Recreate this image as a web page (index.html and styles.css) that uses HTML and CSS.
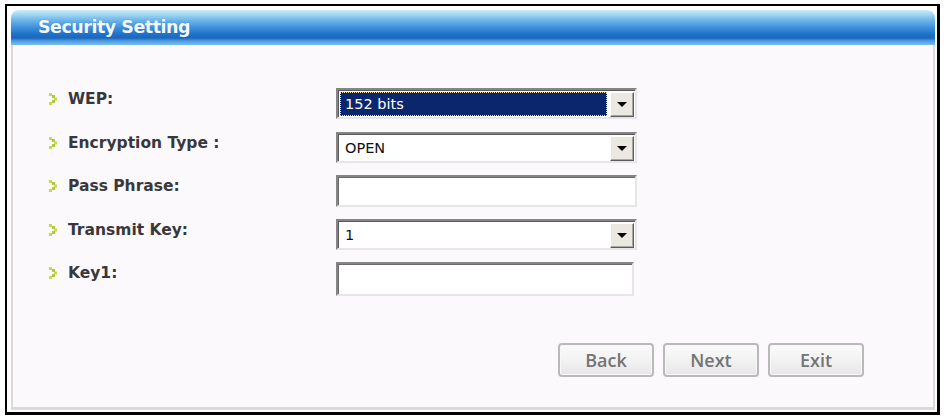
FILE: index.html
```html
<!DOCTYPE html>
<html>
<head>
<meta charset="utf-8">
<title>Security Setting</title>
<link rel="stylesheet" href="styles.css">
</head>
<body>
<div class="frame">
  <div class="panel">
    <div class="header"><h1 class="title">Security Setting</h1></div>
    <div class="content">
      <div class="form">
        <div class="label"><svg class="bullet" width="9" height="12" viewBox="0 0 9 12"><rect x="0" y="0" width="3" height="3" fill="#c4dc48"/><rect x="3" y="2" width="3" height="3" fill="#a9cb3a"/><rect x="5" y="4.5" width="3" height="3" fill="#c4dc48"/><rect x="3" y="7" width="3" height="3" fill="#a9cb3a"/><rect x="0" y="9" width="3" height="3" fill="#c4dc48"/></svg><span>WEP:</span></div>
        <div class="combo"><div class="value selected">152 bits</div><div class="drop"><i class="tri"></i></div></div>

        <div class="label"><svg class="bullet" width="9" height="12" viewBox="0 0 9 12"><rect x="0" y="0" width="3" height="3" fill="#c4dc48"/><rect x="3" y="2" width="3" height="3" fill="#a9cb3a"/><rect x="5" y="4.5" width="3" height="3" fill="#c4dc48"/><rect x="3" y="7" width="3" height="3" fill="#a9cb3a"/><rect x="0" y="9" width="3" height="3" fill="#c4dc48"/></svg><span>Encryption Type :</span></div>
        <div class="combo"><div class="value">OPEN</div><div class="drop"><i class="tri"></i></div></div>

        <div class="label"><svg class="bullet" width="9" height="12" viewBox="0 0 9 12"><rect x="0" y="0" width="3" height="3" fill="#c4dc48"/><rect x="3" y="2" width="3" height="3" fill="#a9cb3a"/><rect x="5" y="4.5" width="3" height="3" fill="#c4dc48"/><rect x="3" y="7" width="3" height="3" fill="#a9cb3a"/><rect x="0" y="9" width="3" height="3" fill="#c4dc48"/></svg><span>Pass Phrase:</span></div>
        <input class="field" type="text">

        <div class="label"><svg class="bullet" width="9" height="12" viewBox="0 0 9 12"><rect x="0" y="0" width="3" height="3" fill="#c4dc48"/><rect x="3" y="2" width="3" height="3" fill="#a9cb3a"/><rect x="5" y="4.5" width="3" height="3" fill="#c4dc48"/><rect x="3" y="7" width="3" height="3" fill="#a9cb3a"/><rect x="0" y="9" width="3" height="3" fill="#c4dc48"/></svg><span>Transmit Key:</span></div>
        <div class="combo"><div class="value">1</div><div class="drop"><i class="tri"></i></div></div>

        <div class="label"><svg class="bullet" width="9" height="12" viewBox="0 0 9 12"><rect x="0" y="0" width="3" height="3" fill="#c4dc48"/><rect x="3" y="2" width="3" height="3" fill="#a9cb3a"/><rect x="5" y="4.5" width="3" height="3" fill="#c4dc48"/><rect x="3" y="7" width="3" height="3" fill="#a9cb3a"/><rect x="0" y="9" width="3" height="3" fill="#c4dc48"/></svg><span>Key1:</span></div>
        <input class="field short" type="text">
      </div>
      <div class="actions">
        <button class="btn">Back</button>
        <button class="btn">Next</button>
        <button class="btn">Exit</button>
      </div>
    </div>
  </div>
</div>
</body>
</html>
```

FILE: styles.css
```css
html, body {
  margin: 0;
  padding: 0;
  background: #ffffff;
}
body {
  width: 946px;
  height: 418px;
  overflow: hidden;
}
.frame {
  margin: 4px 0 0 5px;
  width: 935px;
  height: 411px;
  box-sizing: border-box;
  border-style: solid;
  border-color: #000;
  border-width: 2px 3px 3px 2px;
  padding: 4px 2px 2px 4px;
  display: flex;
  background: #fff;
}
.panel {
  flex: 1;
  display: flex;
  flex-direction: column;
}
.header {
  height: 35px;
  border-radius: 8px 8px 0 0;
  background: linear-gradient(to bottom,
    #cdeefa 0%, #a4d8f3 12%, #6cb4e8 30%, #3f90da 50%,
    #1f70c6 70%, #1a68c0 80%, #4b9be0 88%, #7cbdee 100%);
  display: flex;
  align-items: center;
  padding-left: 27px;
  padding-bottom: 2px;
  box-sizing: border-box;
}
.title {
  margin: 0;
  font-family: "DejaVu Sans", sans-serif;
  font-weight: bold;
  font-size: 17.5px;
  letter-spacing: -0.5px;
  color: #f2f8fd;
  text-shadow: 0 0 1px rgba(30, 90, 160, 0.6);
}
.content {
  flex: 1;
  background: #fcf9fc;
  border-style: solid;
  border-color: #dcd8dc;
  border-width: 0 2px 3px 2px;
  padding: 43px 0 0 36px;
  display: flex;
  flex-direction: column;
}
.form {
  display: grid;
  grid-template-columns: 287px 301px;
  grid-auto-rows: 31px;
  row-gap: 12.5px;
}
.label {
  display: flex;
  align-items: flex-start;
  padding-top: 2px;
  font-family: "DejaVu Sans", sans-serif;
  font-weight: bold;
  font-size: 15.5px;
  line-height: 18px;
  color: #38383c;
}
.bullet {
  margin: 3px 10px 0 0;
  flex: none;
}
.combo {
  display: flex;
  box-sizing: border-box;
  height: 31px;
  border: 2px solid;
  border-color: #858585 #e6e6e6 #e6e6e6 #858585;
  box-shadow: inset 1px 1px 0 #5a5a5a;
  background: #fff;
  padding: 1px 1px 0 1px;
}
.value {
  flex: 1;
  display: flex;
  align-items: center;
  padding-left: 6px;
  font-family: "DejaVu Sans", sans-serif;
  font-size: 14.5px;
  color: #111;
  margin-right: 2px;
}
.value.selected {
  background: #0b266c;
  color: #fff;
  outline: 1px dotted #e8dfae;
  outline-offset: -1px;
  margin: 1px 3px 1px 1px;
  padding-left: 5px;
}
.drop {
  width: 24px;
  flex: none;
  box-sizing: border-box;
  margin-top: 1px;
  background: #ebe8e2;
  border: 1px solid;
  border-color: #ffffff #5c5c5c #5c5c5c #ffffff;
  box-shadow: inset -1px -1px 0 #a8a8a0;
  display: flex;
  align-items: center;
  justify-content: center;
}
.tri {
  display: block;
  width: 0;
  height: 0;
  border-left: 5px solid transparent;
  border-right: 5px solid transparent;
  border-top: 5px solid #000;
}
.field {
  margin: 0;
  box-sizing: border-box;
  width: 301px;
  height: 32px;
  border: 2px solid;
  border-color: #858585 #e6e6e6 #e6e6e6 #858585;
  box-shadow: inset 1px 1px 0 #6a6a6a;
  background: #fff;
  outline: none;
  padding: 0 6px;
  font-family: "DejaVu Sans", sans-serif;
  font-size: 14px;
}
.field.short {
  width: 298px;
  height: 34px;
}
.actions {
  display: flex;
  justify-content: flex-end;
  gap: 9px;
  margin-top: 50px;
  padding-right: 69px;
}
.btn {
  width: 96px;
  height: 34px;
  box-sizing: border-box;
  border: 2px solid #b9b9b9;
  border-radius: 4px;
  background: linear-gradient(to bottom, #fbfbfb 0%, #f2f2f2 50%, #e6e6e6 100%);
  box-shadow: inset 0 0 0 1px #f8f8f8;
  font-family: "Open Sans", sans-serif;
  font-size: 18px;
  font-weight: 600;
  color: #747474;
  padding: 0;
  line-height: 28px;
}
```
